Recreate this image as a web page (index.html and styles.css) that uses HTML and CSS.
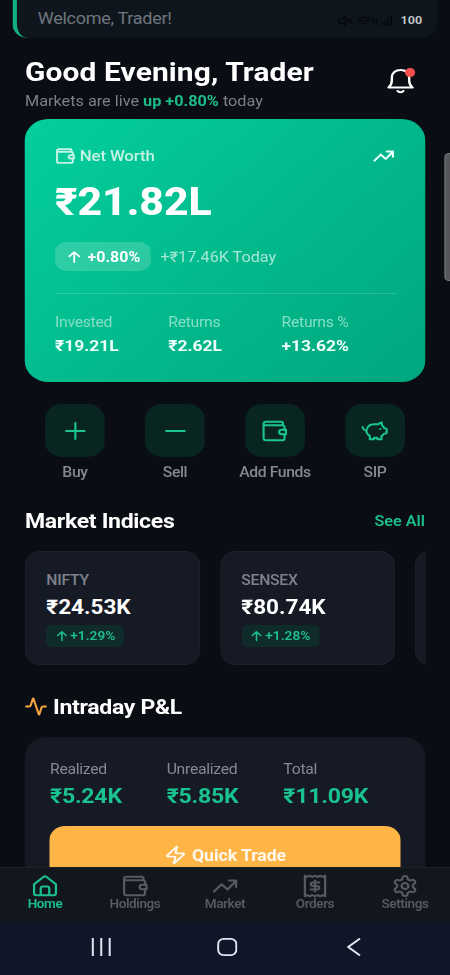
FILE: index.html
```html
<!DOCTYPE html>
<html lang="en">
<head>
<meta charset="utf-8">
<title>Portfolio</title>
<link rel="stylesheet" href="styles.css">
</head>
<body>
<svg class="defs" width="0" height="0" aria-hidden="true">
  <symbol id="wallet" viewBox="0 0 24 24"><path d="M19.5 6.3V4.5a1.7 1.7 0 0 0-1.7-1.7H4.3a2 2 0 0 0-2 2v14.4a2 2 0 0 0 2 2h14.9a1.7 1.7 0 0 0 1.7-1.7v-4.2M20.9 10.8V8a1.7 1.7 0 0 0-1.7-1.7H4.1a1.8 1.8 0 0 1-1.8-1.5"/><path d="M22.2 10.8h-3.8a2.25 2.25 0 0 0 0 4.5h3.8z"/></symbol>
  <symbol id="trend" viewBox="0 0 24 24"><path d="M2.2 17.5 9 10.3l5.2 5.2 7.6-8.5M15.4 6.5h6.5V13"/></symbol>
  <symbol id="up" viewBox="0 0 24 24"><path d="M12 21V3.5M4.5 11 12 3.5l7.500 7.500"/></symbol>
</svg>
<div class="phone">
  <div class="toast"><span>Welcome, Trader!</span></div>
  <div class="status">
    <svg class="st-ic" viewBox="0 0 60 12"><path d="M1 4h3l4-3v10L4 8H1zM10 3l4 5M14 3l-4 5M21 4q6-5 13 0M23 6.500q4.500-3 9 0M25.500 9q2-1.500 4 0M37 3v6M40 9V4M46 11V9M49 11V7M52 11V4M55 11V1"/></svg>
    <b>100</b>
  </div>
  <div class="thumb"></div>
  <main>
    <header>
      <div>
        <h1>Good Evening, Trader</h1>
        <p>Markets are live <b>up +0.80%</b> today</p>
      </div>
      <div class="bell">
        <svg viewBox="0 0 24 26"><path d="M1.300 19.500c2-1.800 3-3.500 3-7V9.500C4.300 5 7.500 2 12 2s7.700 3 7.700 7.500v3c0 3.500 1 5.200 3 7z"/><path d="M9.500 23q2.500 2.500 5 0"/></svg>
        <i></i>
      </div>
    </header>

    <section class="worth">
      <div class="worth-top">
        <svg class="ic"><use href="#wallet"/></svg><span>Net Worth</span>
        <svg class="ic trend"><use href="#trend"/></svg>
      </div>
      <div class="amount">₹21.82L</div>
      <div class="today">
        <span class="pill"><svg class="ic"><use href="#up"/></svg>+0.80%</span>
        <span class="delta">+₹17.46K Today</span>
      </div>
      <div class="stats">
        <div><small>Invested</small><b>₹19.21L</b></div>
        <div><small>Returns</small><b>₹2.62L</b></div>
        <div><small>Returns %</small><b>+13.62%</b></div>
      </div>
    </section>

    <section class="actions">
      <div><span><svg class="ic" viewBox="0 0 24 24"><path d="M12 4v16M3.800 12h16.400"/></svg></span>Buy</div>
      <div><span><svg class="ic" viewBox="0 0 24 24"><path d="M3.800 12h16.400"/></svg></span>Sell</div>
      <div><span><svg class="ic"><use href="#wallet"/></svg></span>Add Funds</div>
      <div><span><svg class="ic" viewBox="0 0 24 24"><path d="M5.400 9.200C6.500 6.600 9 5.300 12 5.300h3.200c1-1.200 2.300-1.900 3.300-1.900-.500 1.200-.300 2.300.300 3.100.9.700 1.400 1.600 1.700 2.700l2.200.7v4.200l-2.500.8c-.6 1.100-1.200 1.600-2.100 2.200v3.200h-3.700v-1.500h-3v1.500H7.700v-3.400C5.700 15.500 4.400 13.400 4.900 11M5 11C3 11.500 1.500 10.300 1.300 8"/><path d="M17 9.900v.2"/></svg></span>SIP</div>
    </section>

    <div class="heading"><h2>Market Indices</h2><a>See All</a></div>
    <section class="indices">
      <div class="index"><small>NIFTY</small><b>₹24.53K</b><span><svg class="ic"><use href="#up"/></svg>+1.29%</span></div>
      <div class="index"><small>SENSEX</small><b>₹80.74K</b><span><svg class="ic"><use href="#up"/></svg>+1.28%</span></div>
      <div class="index"></div>
    </section>

    <div class="heading intraday"><svg class="ic" viewBox="0 0 24 24"><path d="M22.500 12h-2.800a2 2 0 0 0-1.900 1.460l-2.300 8.200a.25.25 0 0 1-.48 0L9.240 2.400a.25.25 0 0 0-.48 0l-2.350 8.140A2 2 0 0 1 4.490 12H1.500"/></svg><h2>Intraday P&amp;L</h2></div>
    <section class="pnl">
      <div class="pnl-row">
        <div><small>Realized</small><b>₹5.24K</b></div>
        <div><small>Unrealized</small><b>₹5.85K</b></div>
        <div><small>Total</small><b>₹11.09K</b></div>
      </div>
      <div class="trade"><svg class="ic" viewBox="0 0 24 24"><path d="M4 14a1 1 0 0 1-.78-1.630l9.900-10.200a.5.5 0 0 1 .86.460l-1.920 6.020A1 1 0 0 0 13 10h7a1 1 0 0 1 .78 1.630l-9.900 10.200a.5.5 0 0 1-.86-.460l1.920-6.020A1 1 0 0 0 11 14z"/></svg>Quick Trade</div>
    </section>
  </main>

  <nav>
    <div class="active"><svg class="ic" viewBox="0 0 24 24"><path d="M2.300 10.300 10.600 2.900a2.100 2.100 0 0 1 2.800 0l8.300 7.400v8.900a2 2 0 0 1-2 2H4.300a2 2 0 0 1-2-2z"/><path d="M8.200 21v-6.500a2 2 0 0 1 2-2h3.600a2 2 0 0 1 2 2V21"/></svg>Home</div>
    <div><svg class="ic"><use href="#wallet"/></svg>Holdings</div>
    <div><svg class="ic"><use href="#trend"/></svg>Market</div>
    <div><svg class="ic" viewBox="0 0 24 24"><path d="M3 1.700 5 3l2.300-1.300L9.700 3 12 1.700 14.300 3l2.400-1.300L19 3l2-1.300v20.600L19 21l-2.300 1.300-2.400-1.300L12 22.300 9.700 21l-2.400 1.300L5 21l-2 1.300z"/><path d="M15.800 8.600H10a1.700 1.700 0 0 0 0 3.400h4a1.700 1.700 0 0 1 0 3.400H8.200M12 6.500v11"/></svg>Orders</div>
    <div><svg class="ic" viewBox="0 0 24 24"><path d="M12.220 2h-.44a2 2 0 0 0-2 2v.18a2 2 0 0 1-1 1.730l-.43.25a2 2 0 0 1-2 0l-.15-.08a2 2 0 0 0-2.730.730l-.22.380a2 2 0 0 0 .730 2.730l.15.100a2 2 0 0 1 1 1.720v.510a2 2 0 0 1-1 1.740l-.15.090a2 2 0 0 0-.730 2.730l.22.380a2 2 0 0 0 2.730.730l.15-.080a2 2 0 0 1 2 0l.43.250a2 2 0 0 1 1 1.730V20a2 2 0 0 0 2 2h.44a2 2 0 0 0 2-2v-.180a2 2 0 0 1 1-1.730l.43-.250a2 2 0 0 1 2 0l.15.080a2 2 0 0 0 2.730-.730l.22-.390a2 2 0 0 0-.730-2.730l-.15-.080a2 2 0 0 1-1-1.740v-.500a2 2 0 0 1 1-1.740l.15-.090a2 2 0 0 0 .730-2.730l-.22-.380a2 2 0 0 0-2.730-.730l-.15.080a2 2 0 0 1-2 0l-.43-.250a2 2 0 0 1-1-1.730V4a2 2 0 0 0-2-2z"/><circle cx="12" cy="12" r="3"/></svg>Settings</div>
  </nav>
  <footer>
    <svg viewBox="0 0 18 18"><path d="M1.500 0v18M9 0v18M16.500 0v18"/></svg>
    <svg viewBox="0 0 18 18"><rect x=".9" y=".9" width="16.200" height="16.200" rx="5"/></svg>
    <svg viewBox="0 0 18 18"><path d="M15 .5 4.500 9 15 17.500"/></svg>
  </footer>
</div>
</body>
</html>
```

FILE: styles.css
```css
* { box-sizing: border-box; }
body { margin: 0; height: 975px; overflow: hidden; background: #0a0d14; font-family: Roboto, sans-serif; }
.defs { position: absolute; }
h1, h2, p { margin: 0; }
small, b { display: block; font-size: inherit; }

.phone { position: relative; width: 400px; height: 975px; display: flex; flex-direction: column; transform: scaleX(1.125); transform-origin: 0 0; color: #fff; overflow: hidden; }
.ic { width: 24px; height: 24px; flex: none; }
svg { fill: none; stroke: currentColor; stroke-width: 2; stroke-linecap: round; stroke-linejoin: round; }

.toast { position: absolute; top: -20px; left: 10.7px; width: 378px; height: 58px; border-left: 4px solid #12b184; border-radius: 0 0 14px 14px; background: #0e151d; padding: 28px 0 0 18.900px; font-size: 16px; letter-spacing: -.25px; line-height: 21px; color: #70757c; }
.status { position: absolute; top: 14px; left: 300px; display: flex; gap: 4px; align-items: center; font-size: 11.200px; line-height: 14px; color: #bfc2c5; }
.st-ic { width: 52px; height: 12px; color: #05080c; stroke-width: 1.600; }
.thumb { position: absolute; top: 153px; right: -4px; width: 9px; height: 128px; border-radius: 4px; background: #56575b; border: 1px solid #77787c; }

main { flex: 1; min-height: 0; overflow: hidden; padding: 56px 22.220px 0; }
header { display: flex; justify-content: space-between; height: 63px; }
h1 { font-size: 26.600px; line-height: 32px; font-weight: 700; letter-spacing: .1px; white-space: nowrap; }
header p { margin-top: 5px; font-size: 14.450px; line-height: 18px; color: #7d8088; }
header p b { display: inline; color: #1cbd8b; }
.bell { position: relative; width: 24px; height: 26px; margin: 12px 9.800px 0 0; }
.bell svg { width: 24px; height: 26px; stroke-width: 2.100; }
.bell i { position: absolute; left: 16.500px; top: 0; width: 9px; height: 9px; border-radius: 50%; background: #fc5050; }

.worth { height: 262.500px; padding: 27px 25px 0 26.670px; border-radius: 21px; background: linear-gradient(135deg, #04cf9c, #01a67e); }
.worth-top { display: flex; align-items: center; height: 20px; font-size: 15px; letter-spacing: -.15px; font-weight: 500; color: #c4f3e5; }
.worth-top .ic { width: 18px; height: 18px; margin-right: 4px; stroke-width: 2.400; }
.worth-top .trend { width: 20px; height: 20px; margin: 0 1.500px 0 auto; color: #e8fff9; stroke-width: 2.400; }
.amount { margin-top: 13.500px; font-size: 38px; line-height: 44px; font-weight: 800; letter-spacing: -.05px; }
.today { display: flex; align-items: center; gap: 8.500px; margin-top: 18.500px; height: 29px; }
.pill { display: flex; align-items: center; gap: 5px; width: 85.300px; height: 29px; padding: 1px 0 0 10px; border-radius: 10px; background: #ffffff2b; font-size: 14.200px; font-weight: 700; }
.pill .ic { width: 14px; height: 14px; stroke-width: 2.800; }
.delta { padding-top: 1px; font-size: 14.400px; color: #a5e8d5; white-space: nowrap; }
.stats { display: grid; grid-template-columns: repeat(3, 100.700px); margin-top: 21.500px; padding-top: 19px; border-top: 1px solid #ffffff2b; }
.stats small { font-size: 14px; letter-spacing: -.25px; line-height: 18px; color: #86dfc6; }
.stats b { margin-top: 5px; font-size: 15.500px; line-height: 20px; color: #effffb; }

.actions { display: grid; grid-template-columns: repeat(4, 1fr); margin-top: 22.500px; height: 76px; text-align: center; font-size: 14px; letter-spacing: -.35px; line-height: 18px; font-weight: 500; color: #85888f; white-space: nowrap; }
.actions span { display: flex; align-items: center; justify-content: center; width: 53.300px; height: 53px; margin: 0 auto 6px; border-radius: 15px; background: #082521; color: #1bc590; }
.actions .ic { stroke-width: 1.900; }

.heading { display: flex; align-items: center; height: 24px; margin-top: 29px; }
h2 { font-size: 20.500px; letter-spacing: -.3px; line-height: 24px; font-weight: 700; white-space: nowrap; }
.heading a { margin-left: auto; font-size: 14.400px; font-weight: 600; color: #1bbd8a; }
.indices { display: flex; gap: 17.780px; height: 114px; margin-top: 18px; overflow: hidden; }
.index { flex: none; width: 155.560px; padding: 19px 0 0 18px; border: 1px solid #1c212a; border-radius: 14px; background: #151a24; }
.index small { font-size: 14px; letter-spacing: -.25px; line-height: 18px; font-weight: 500; color: #7e828c; }
.index b { margin-top: 7px; font-size: 20px; line-height: 22px; }
.index span { display: flex; align-items: center; gap: 2px; width: 69px; height: 22px; margin-top: 7px; padding-left: 7.300px; border-radius: 5px; background: #102b2b; font-size: 12.200px; font-weight: 600; color: #1dbd8e; }
.index .ic { width: 12px; height: 12px; stroke-width: 2.800; }
.intraday { margin-top: 30px; gap: 5px; }
.intraday .ic { width: 20px; height: 21px; margin-bottom: 2px; color: #f9a541; stroke-width: 2.200; }

.pnl { margin-top: 18px; height: 190px; padding: 23px 22.220px 0; border-radius: 20px; background: #151a24; }
.pnl-row { display: grid; grid-template-columns: repeat(3, 1fr); font-size: 14px; line-height: 18px; color: #858993; }
.pnl-row small { letter-spacing: -.25px; }
.pnl-row b { margin-top: 6px; font-size: 20.500px; letter-spacing: -.2px; line-height: 24px; color: #1ac291; }
.trade { display: flex; justify-content: center; align-items: center; gap: 5px; height: 57px; margin-top: 18px; padding-top: 1px; border-radius: 14px; background: #ffb446; font-size: 15.700px; letter-spacing: -.05px; font-weight: 700; color: #fff8ec; }
.trade .ic { width: 20px; height: 20px; stroke-width: 2.200; }

nav { display: grid; grid-template-columns: repeat(5, 80px); height: 56px; padding-top: 6px; border-top: 1px solid #1c2228; background: #11171c; text-align: center; font-size: 12px; letter-spacing: -.35px; line-height: 14px; font-weight: 600; color: #565a61; }
nav div { display: flex; flex-direction: column; align-items: center; }
nav .ic { margin-bottom: -1px; }
nav .active { color: #1cc08e; }
footer { display: flex; gap: 94px; height: 52px; background: #0e1628; align-items: center; padding: 0 0 4px 80.800px; color: #dfe5f2; }
footer svg { flex: none; width: 18px; height: 18px; stroke-width: 1.800; stroke-linecap: butt; }
```
